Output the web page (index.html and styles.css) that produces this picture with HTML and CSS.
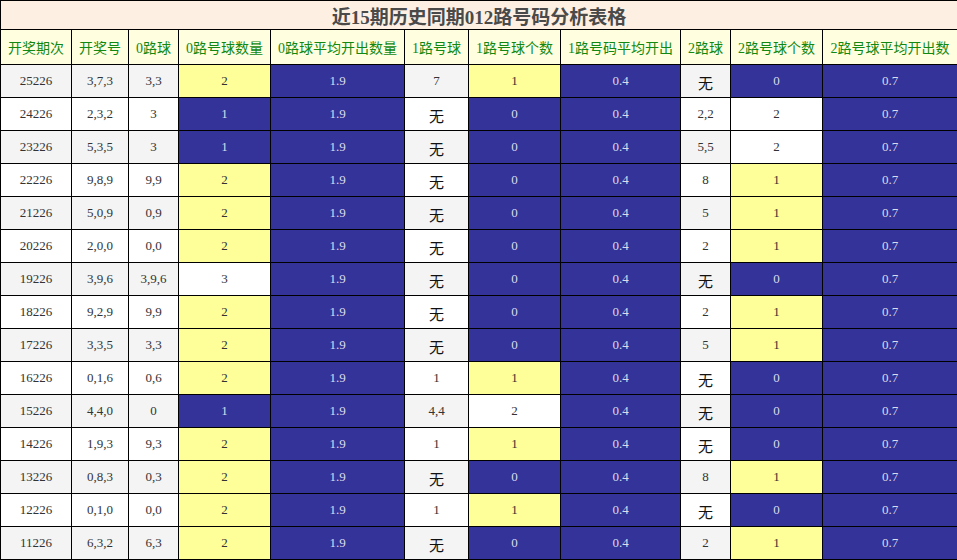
FILE: index.html
```html
<!DOCTYPE html>
<html lang="zh">
<head>
<meta charset="utf-8">
<title>近15期历史同期012路号码分析表格</title>
<link rel="stylesheet" href="styles.css">
</head>
<body>
<table class="tbl">
  <colgroup>
    <col class="c1"><col class="c2"><col class="c3"><col class="c4"><col class="c5"><col class="c6"><col class="c7"><col class="c8"><col class="c9"><col class="c10"><col class="c11">
  </colgroup>
  <thead>
    <tr class="title"><th colspan="11">近15期历史同期012路号码分析表格</th></tr>
    <tr class="head">
      <th>开奖期次</th><th>开奖号</th><th>0路球</th><th>0路号球数量</th><th>0路球平均开出数量</th><th>1路号球</th><th>1路号球个数</th><th>1路号码平均开出</th><th>2路球</th><th>2路号球个数</th><th>2路号球平均开出数</th>
    </tr>
  </thead>
  <tbody>
    <tr class="g"><td>25226</td><td>3,7,3</td><td>3,3</td><td class="y">2</td><td class="b">1.9</td><td>7</td><td class="y">1</td><td class="b">0.4</td><td class="wu">无</td><td class="b">0</td><td class="b">0.7</td></tr>
    <tr><td>24226</td><td>2,3,2</td><td>3</td><td class="b">1</td><td class="b">1.9</td><td class="wu">无</td><td class="b">0</td><td class="b">0.4</td><td>2,2</td><td class="w">2</td><td class="b">0.7</td></tr>
    <tr class="g"><td>23226</td><td>5,3,5</td><td>3</td><td class="b">1</td><td class="b">1.9</td><td class="wu">无</td><td class="b">0</td><td class="b">0.4</td><td>5,5</td><td class="w">2</td><td class="b">0.7</td></tr>
    <tr><td>22226</td><td>9,8,9</td><td>9,9</td><td class="y">2</td><td class="b">1.9</td><td class="wu">无</td><td class="b">0</td><td class="b">0.4</td><td>8</td><td class="y">1</td><td class="b">0.7</td></tr>
    <tr class="g"><td>21226</td><td>5,0,9</td><td>0,9</td><td class="y">2</td><td class="b">1.9</td><td class="wu">无</td><td class="b">0</td><td class="b">0.4</td><td>5</td><td class="y">1</td><td class="b">0.7</td></tr>
    <tr><td>20226</td><td>2,0,0</td><td>0,0</td><td class="y">2</td><td class="b">1.9</td><td class="wu">无</td><td class="b">0</td><td class="b">0.4</td><td>2</td><td class="y">1</td><td class="b">0.7</td></tr>
    <tr class="g"><td>19226</td><td>3,9,6</td><td>3,9,6</td><td class="w">3</td><td class="b">1.9</td><td class="wu">无</td><td class="b">0</td><td class="b">0.4</td><td class="wu">无</td><td class="b">0</td><td class="b">0.7</td></tr>
    <tr><td>18226</td><td>9,2,9</td><td>9,9</td><td class="y">2</td><td class="b">1.9</td><td class="wu">无</td><td class="b">0</td><td class="b">0.4</td><td>2</td><td class="y">1</td><td class="b">0.7</td></tr>
    <tr class="g"><td>17226</td><td>3,3,5</td><td>3,3</td><td class="y">2</td><td class="b">1.9</td><td class="wu">无</td><td class="b">0</td><td class="b">0.4</td><td>5</td><td class="y">1</td><td class="b">0.7</td></tr>
    <tr><td>16226</td><td>0,1,6</td><td>0,6</td><td class="y">2</td><td class="b">1.9</td><td>1</td><td class="y">1</td><td class="b">0.4</td><td class="wu">无</td><td class="b">0</td><td class="b">0.7</td></tr>
    <tr class="g"><td>15226</td><td>4,4,0</td><td>0</td><td class="b">1</td><td class="b">1.9</td><td>4,4</td><td class="w">2</td><td class="b">0.4</td><td class="wu">无</td><td class="b">0</td><td class="b">0.7</td></tr>
    <tr><td>14226</td><td>1,9,3</td><td>9,3</td><td class="y">2</td><td class="b">1.9</td><td>1</td><td class="y">1</td><td class="b">0.4</td><td class="wu">无</td><td class="b">0</td><td class="b">0.7</td></tr>
    <tr class="g"><td>13226</td><td>0,8,3</td><td>0,3</td><td class="y">2</td><td class="b">1.9</td><td class="wu">无</td><td class="b">0</td><td class="b">0.4</td><td>8</td><td class="y">1</td><td class="b">0.7</td></tr>
    <tr><td>12226</td><td>0,1,0</td><td>0,0</td><td class="y">2</td><td class="b">1.9</td><td>1</td><td class="y">1</td><td class="b">0.4</td><td class="wu">无</td><td class="b">0</td><td class="b">0.7</td></tr>
    <tr class="g"><td>11226</td><td>6,3,2</td><td>6,3</td><td class="y">2</td><td class="b">1.9</td><td class="wu">无</td><td class="b">0</td><td class="b">0.4</td><td>2</td><td class="y">1</td><td class="b">0.7</td></tr>
  </tbody>
</table>
</body>
</html>
```
FILE: styles.css
```css
html, body {
  margin: 0;
  padding: 0;
  background: #ffffff;
}

.tbl {
  width: 957px;
  border-collapse: collapse;
  table-layout: fixed;
  font-family: "Liberation Serif", "Noto Sans CJK SC", serif;
}

.c1 { width: 71px; }
.c2 { width: 57px; }
.c3 { width: 50px; }
.c4 { width: 92px; }
.c5 { width: 134px; }
.c6 { width: 64px; }
.c7 { width: 92px; }
.c8 { width: 120px; }
.c9 { width: 50px; }
.c10 { width: 92px; }
.c11 { width: 135px; }

.tbl th,
.tbl td {
  border: 1px solid #000;
  padding: 0;
  text-align: center;
  vertical-align: middle;
  white-space: nowrap;
  overflow: hidden;
}

.title th {
  height: 28px;
  background: #fdf0e2;
  color: #4a4a4a;
  font-size: 19px;
  font-weight: bold;
}

.head th {
  height: 34px;
  background: #ffffe0;
  color: #118811;
  font-size: 14px;
  font-weight: normal;
}

.tbl td {
  height: 32px;
  font-size: 13px;
  color: #333;
  background: #ffffff;
}

.tbl tr.g td {
  background: #f4f4f4;
}

.tbl td.y,
.tbl tr.g td.y {
  background: #ffff99;
  color: #333;
}

.tbl td.b,
.tbl tr.g td.b {
  background: #333399;
  color: #dcdcec;
}

.tbl td.w,
.tbl tr.g td.w {
  background: #ffffff;
}

.tbl td.wu {
  height: 29px;
  padding-top: 3px;
  font-family: "Noto Sans CJK SC", sans-serif;
  font-size: 15px;
  color: #111;
}
```
